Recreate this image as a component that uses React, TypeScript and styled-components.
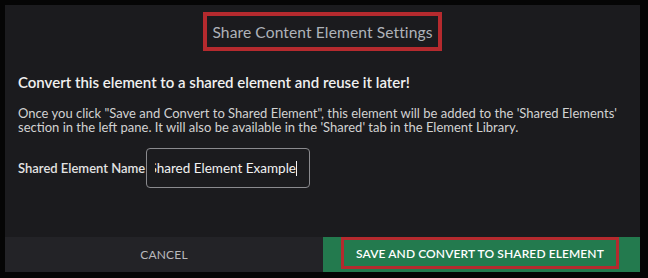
import React from "react";
import styled, { createGlobalStyle } from "styled-components";

const Global = createGlobalStyle`
  html, body { margin: 0; padding: 0; background: #000; }
  body { width: 648px; height: 278px; overflow: hidden; font-family: Lato, "Noto Sans", sans-serif; }
  * { box-sizing: border-box; }
`;

const Frame = styled.div`
  width: 648px;
  height: 278px;
  background: #050505;
  padding: 5px 8px 6px 5px;
`;

const Panel = styled.div`
  height: 100%;
  background: #1b1b1e;
  display: flex;
  flex-direction: column;
`;

const Header = styled.div`
  display: flex;
  justify-content: center;
  padding-top: 7px;
`;

const TitleBox = styled.div`
  width: 239px;
  height: 39px;
  border: 4px solid #b52a2e;
  display: flex;
  align-items: center;
  justify-content: center;
  color: #aeb2b9;
  font-size: 15.6px;
  letter-spacing: 0.1px;
`;

const Body = styled.div`
  flex: 1;
  padding: 21px 13px 0 13px;
  color: #e6e6e6;
`;

const Heading = styled.div`
  font-size: 15px;
  font-weight: 600;
  color: #f0f0f0;
  line-height: 20px;
`;

const Para = styled.p`
  margin: 14px 0 0 0;
  font-size: 13px;
  line-height: 14px;
  color: #d2d2d2;
`;

const FieldRow = styled.div`
  display: flex;
  align-items: center;
  margin-top: 14px;
`;

const Label = styled.label`
  font-size: 13px;
  font-weight: 600;
  color: #e2e2e2;
  width: 128px;
  white-space: nowrap;
`;

const InputBox = styled.div`
  width: 164px;
  height: 40px;
  border: 1.5px solid #8a8a8e;
  border-radius: 4px;
  display: flex;
  align-items: center;
  padding: 0 12px 0 8px;
`;

const InputClip = styled.div`
  flex: 1;
  overflow: hidden;
  display: flex;
  justify-content: flex-end;
`;

const InputText = styled.span`
  font-size: 13.5px;
  color: #f2f2f2;
  white-space: nowrap;
  border-right: 1px solid #f2f2f2;
  line-height: 15px;
  flex-shrink: 0;
`;

const Footer = styled.div`
  display: flex;
  height: 35px;
`;

const CancelButton = styled.div`
  width: 318px;
  background: #232327;
  display: flex;
  align-items: center;
  justify-content: center;
  color: #b9b9bd;
  font-size: 12px;
  letter-spacing: 0.2px;
`;

const SaveArea = styled.div`
  flex: 1;
  background: #237a4e;
  display: flex;
  align-items: center;
  padding-left: 18px;
`;

const SaveBox = styled.div`
  width: 278px;
  height: 32px;
  border: 3px solid #b52a2e;
  margin-top: -3px;
  display: flex;
  align-items: center;
  justify-content: center;
  color: #ffffff;
  font-size: 12px;
  font-weight: 600;
  letter-spacing: 0.1px;
`;

export default function App() {
  return (
    <>
      <Global />
      <Frame>
        <Panel>
          <Header>
            <TitleBox>Share Content Element Settings</TitleBox>
          </Header>
          <Body>
            <Heading>Convert this element to a shared element and reuse it later!</Heading>
            <Para>
              Once you click "Save and Convert to Shared Element", this element will be added to the 'Shared Elements'
              section in the left pane. It will also be available in the 'Shared' tab in the Element Library.
            </Para>
            <FieldRow>
              <Label>Shared Element Name</Label>
              <InputBox>
                <InputClip>
                  <InputText>Shared Element Example</InputText>
                </InputClip>
              </InputBox>
            </FieldRow>
          </Body>
          <Footer>
            <CancelButton>CANCEL</CancelButton>
            <SaveArea>
              <SaveBox>SAVE AND CONVERT TO SHARED ELEMENT</SaveBox>
            </SaveArea>
          </Footer>
        </Panel>
      </Frame>
    </>
  );
}
